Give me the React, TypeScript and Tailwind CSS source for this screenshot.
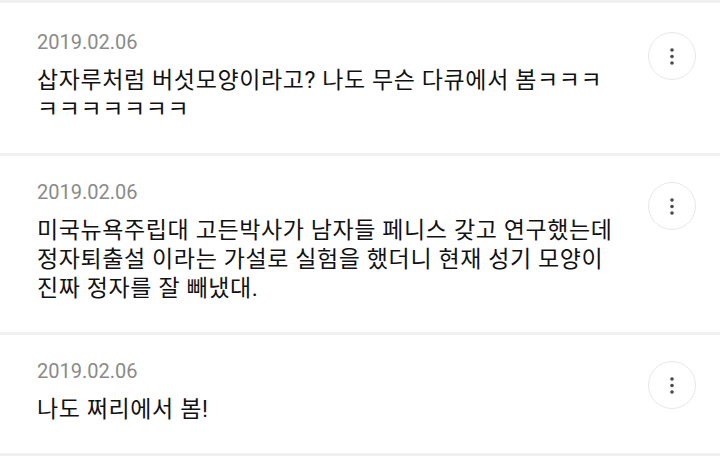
import React from 'react';

type Comment = {
    id: number;
    date: string;
    text: string;
};

// ㅋ runs get zero-width spaces so keep-all can still wrap inside them
const kk = 'ㅋ\u200B'.repeat(10);

const comments: Comment[] = [
    { id: 1, date: '2019.02.06', text: `삽자루처럼 버섯모양이라고? 나도 무슨 다큐에서 봄\u200B${kk}` },
    {
        id: 2,
        date: '2019.02.06',
        text: '미국뉴욕주립대 고든박사가 남자들 페니스 갖고 연구했는데 정자퇴출설 이라는 가설로 실험을 했더니 현재 성기 모양이 진짜 정자를 잘 빼냈대.',
    },
    { id: 3, date: '2019.02.06', text: '나도 쩌리에서 봄!' },
];

const MoreButton: React.FC = () => (
    <button
        type="button"
        className="mt-[2px] flex h-[48px] w-[48px] shrink-0 items-center justify-center rounded-full border border-[#e8e8e8] bg-white"
    >
        <svg width="4" height="17" viewBox="0 0 4 17" fill="#4a4a4a">
            <circle cx="2" cy="2" r="1.8" />
            <circle cx="2" cy="8.5" r="1.8" />
            <circle cx="2" cy="15" r="1.8" />
        </svg>
    </button>
);

export default function App() {
    return (
        <div
            className="h-[460px] w-[720px] overflow-hidden bg-white"
            style={{ fontFamily: 'Roboto, "Noto Sans CJK KR", sans-serif' }}
        >
            <div className="h-[3px] bg-[#f0f0f0]" />
            <div className="mt-[3px]">
                {comments.map((c) => (
                    <div key={c.id} className="border-b-[3px] border-[#f0f0f0]">
                        <div className="flex items-start pb-[29px] pl-[37px] pr-[24px] pt-[24px]">
                            <div className="mr-[33px] min-w-0 flex-1">
                                <div className="text-[20px] leading-[24px] text-[#8a8a8a]">{c.date}</div>
                                <p className="mt-[12px] break-keep text-[23px] leading-[29px] tracking-[0.6px] text-[#111111]">
                                    {c.text}
                                </p>
                            </div>
                            <MoreButton />
                        </div>
                    </div>
                ))}
            </div>
        </div>
    );
}
